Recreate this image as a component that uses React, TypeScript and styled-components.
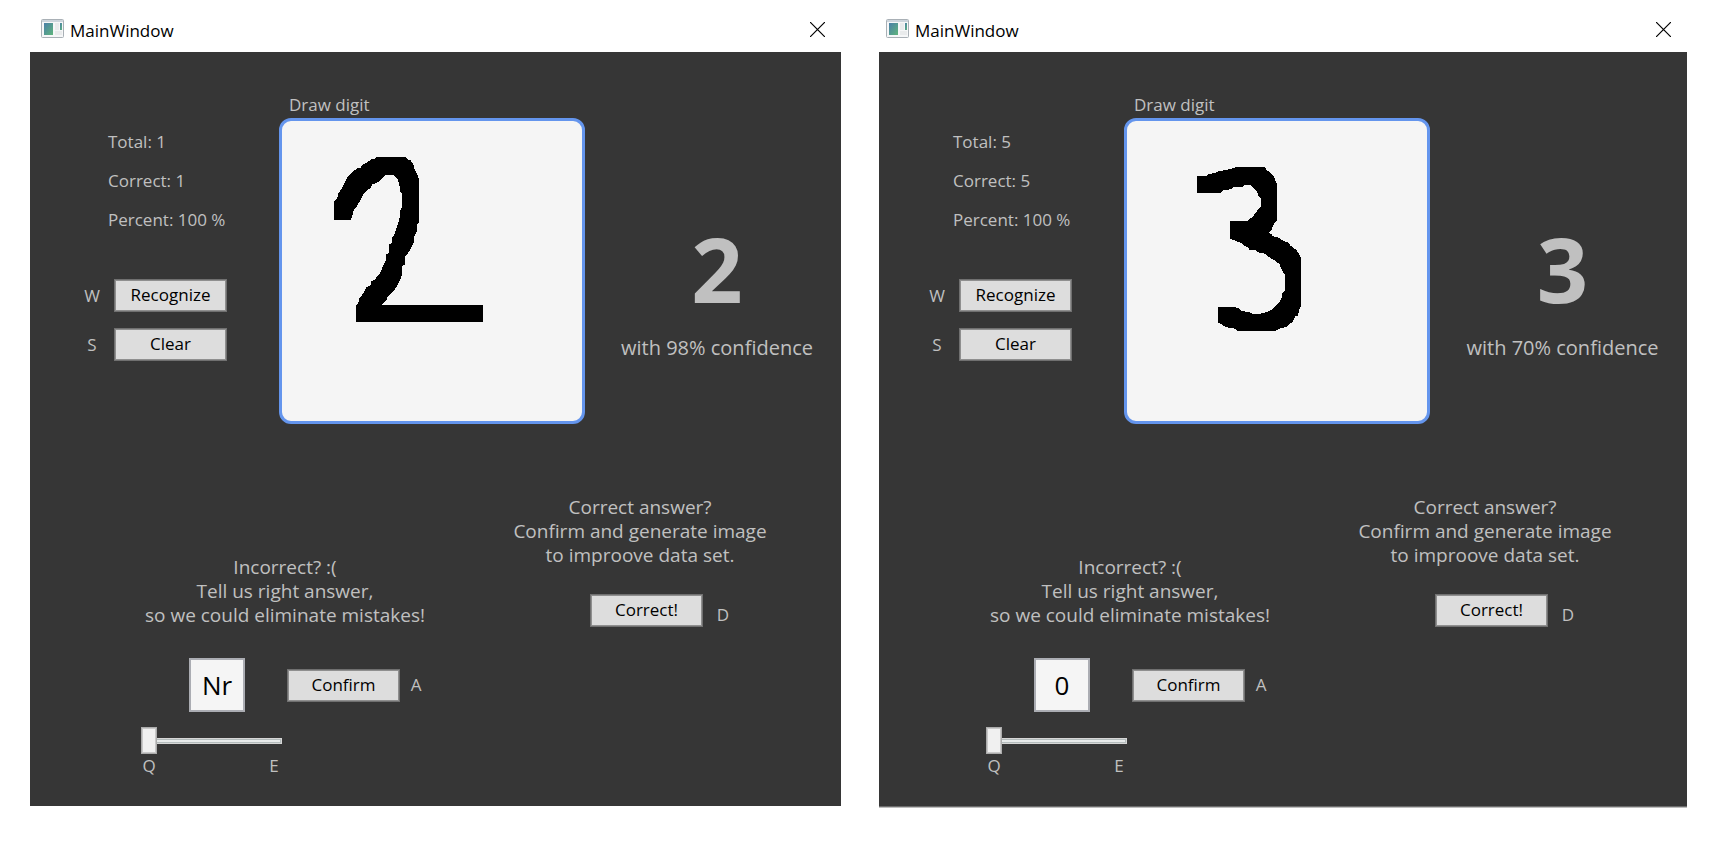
import React, { useId, useState } from "react";
import styled, { createGlobalStyle } from "styled-components";

const GlobalStyle = createGlobalStyle`
  *, *::before, *::after { box-sizing: border-box; }
  body { margin: 0; background: #fff; }
  p { margin: 0; }
  button, input { font: inherit; }
`;

const Desktop = styled.main`
  display: grid;
  grid-template-columns: 811fr 808fr;
  align-items: start;
  gap: 38px;
  padding: 0 33px 0 30px;
  font-family: "Trebuchet MS", "Open Sans", "Noto Sans", sans-serif;
  font-size: 17px;
  line-height: 24px;
`;

const Frame = styled.section<{ $clip: number }>`
  min-width: 0;
  overflow: hidden;

  & > * {
    margin-left: ${(p) => -p.$clip}px;
  }
`;

const TitleBar = styled.header`
  display: flex;
  align-items: center;
  gap: 6px;
  height: 52px;
  padding: 6px 8px 0 11px;
`;

const AppIcon = styled.svg`
  flex: none;
  margin-bottom: 2px;
`;

const WindowTitle = styled.h1`
  flex: 1;
  margin: 0;
  padding-top: 3px;
  color: #000;
  font-family: "Segoe UI", "Open Sans", sans-serif;
  font-size: 17px;
  font-weight: 400;
`;

const CloseButton = styled.button`
  display: grid;
  place-items: center;
  width: 31px;
  height: 31px;
  padding: 0;
  border: 0;
  background: transparent;
`;

const Client = styled.div<{ $edge: boolean }>`
  color: #c0c0c0;
  background: #363636;
  border-bottom: ${(p) => (p.$edge ? "1px solid #bdbdbd" : "0")};
  box-shadow: ${(p) => (p.$edge ? "inset 0 -1px #6c6c6c" : "none")};
  padding-bottom: ${(p) => (p.$edge ? 29 : 28)}px;
`;

const Upper = styled.div`
  display: grid;
  grid-template-columns: 249px 306px 1fr;
`;

const SidePanel = styled.div`
  padding: 78px 0 0 54px;
`;

const Stats = styled.div`
  display: grid;
  gap: 15px;
  padding-left: 24px;
  margin-bottom: 47px;
`;

const Actions = styled.div`
  display: grid;
  gap: 16px;
`;

const ActionRow = styled.div`
  display: flex;
  align-items: center;
  gap: 14px;
`;

const Hotkey = styled.kbd`
  width: 16px;
  font-family: inherit;
  text-align: center;
`;

const PushButton = styled.button`
  width: 113px;
  height: 33px;
  padding: 0 0 1px;
  border: 1px solid #707070;
  box-shadow: inset 0 0 0 1px #8f8f8f;
  background: #ddd;
  color: #000;
  line-height: 24px;
`;

const Drawing = styled.figure`
  display: flex;
  flex-direction: column;
  gap: 1px;
  margin: 0;
  padding-top: 41px;
`;

const DrawingLabel = styled.figcaption`
  padding-left: 10px;
`;

const Pad = styled.svg`
  width: 306px;
  height: 306px;
  border: 3px solid #6495ed;
  border-radius: 12px;
  background: #f5f5f5;
`;

const Result = styled.div`
  display: flex;
  flex-direction: column;
  align-items: center;
  gap: 20px;
  padding: 168px 0 0 8px;
`;

const Guess = styled.output`
  font-size: 90px;
  font-weight: 700;
  line-height: 96px;
`;

const Confidence = styled.p`
  font-size: 20px;
`;

const Lower = styled.div`
  display: grid;
  grid-template-columns: 288px 260px;
  gap: 81px;
  padding: 71px 0 0 111px;
`;

const Wrong = styled.div`
  padding-top: 60px;
`;

const Message = styled.p`
  font-size: 19px;
  text-align: center;
  white-space: pre-line;
`;

const AnswerRow = styled.div`
  display: flex;
  align-items: center;
  margin: 31px 0 15px;
  padding-left: 48px;
`;

const AnswerBox = styled.input`
  width: 56px;
  height: 54px;
  margin-right: 42px;
  padding: 0;
  border: 2px solid #abadb3;
  background: #f5f5f5;
  color: #000;
  font-size: 26px;
  text-align: center;
`;

const ConfirmKey = styled(Hotkey)`
  margin-left: 8px;
`;

const SliderGroup = styled.div`
  width: 141px;
`;

const Slider = styled.input`
  display: block;
  appearance: none;
  width: 100%;
  height: 27px;
  margin: 0;
  background: transparent;

  &::-webkit-slider-runnable-track {
    height: 6px;
    background: #e7eaea;
    box-shadow: inset 0 0 0 1px #d6d6d6, inset 0 0 0 2px #b4bcbc;
  }

  &::-webkit-slider-thumb {
    appearance: none;
    width: 16px;
    height: 27px;
    margin-top: -11px;
    border: 1px solid #acacac;
    background: #f0f0f0;
    box-shadow: inset 0 0 0 1px #c8c8c8;
  }
`;

const SliderKeys = styled.div`
  display: flex;
  justify-content: space-between;
`;

const Right = styled.div`
  display: grid;
  align-content: start;
  gap: 27px;
`;

const CorrectRow = styled.div`
  display: flex;
  align-items: flex-end;
  gap: 12px;
  padding-left: 80px;
`;

const STROKES = {
  two: "M320 231H405L413 238L422 241L431 255L434 270L440 280L446 295V428L442 431L440 455L434 465L431 488L424 502L415 518L405 530V553L397 558V583L391 598L379 622L366 638L352 652L350 661L342 668L333 676H639V726H257V677L265 668L268 655L280 640L289 622L302 616L304 604L313 600L330 580L340 556L348 540V523L356 520V493L365 490L366 474L374 462L382 435L388 420L391 390L397 378V342L391 335L388 315L383 298L370 285H348L335 298L320 309L308 312L300 325L283 338L270 362L260 380L252 388L247 408L242 420H193V362L202 355L205 340L215 325L231 294L245 279L262 264L273 263L276 255L290 249L304 237L318 235Z",
  three:
    "M376 262H464L470 270L478 275L491 290L500 309V423L494 428L484 450L474 459L484 462L488 468L508 474L520 483L536 488L540 496L557 508L568 523L573 535V680L568 688L564 706L555 710L549 725L535 735L527 742L512 744L498 752H382L370 744L350 742L330 731L325 728V681H373L388 686L394 693L419 696L430 703H452L455 699L470 697L490 686L500 676L514 658L516 642L524 632V584L518 575L508 552L495 542L478 532L462 520L444 517L437 509L418 509L414 501L403 498L395 490L361 476V424H410L428 410L440 394L452 379V353L446 348L440 334L424 316H403L400 320L372 320L362 328L341 330L331 339H262V289H289L295 282L315 279L328 272L350 271L356 266L374 265Z",
};

type WindowProps = {
  total: number;
  correct: number;
  guess: string;
  confidence: number;
  answer: string;
  stroke: string;
  viewBox: string;
  clip?: number;
  edge?: boolean;
};

function WindowIcon() {
  const fill = useId();
  return (
    <AppIcon width="23" height="19" viewBox="0 0 23 19" aria-hidden="true">
      <defs>
        <linearGradient id={fill} x1="0" y1="0" x2="1" y2="1">
          <stop offset="0" stopColor="#4a7fa8" />
          <stop offset="1" stopColor="#5fb57c" />
        </linearGradient>
      </defs>
      <rect x="0.5" y="0.5" width="22" height="18" rx="1" fill="#f6f7f8" stroke="#a9b0b6" />
      <rect x="1" y="1" width="21" height="2" fill="#cdd5dc" />
      <rect x="3" y="4" width="9" height="12" fill={`url(#${fill})`} />
      <rect x="14" y="4" width="4" height="7" fill="#e9ebec" />
      <rect x="19" y="4" width="2" height="7" fill={`url(#${fill})`} />
      <rect x="14" y="12" width="7" height="4" fill="#e9ebec" />
    </AppIcon>
  );
}

function RecognizerWindow(props: WindowProps) {
  const [slider, setSlider] = useState(0);
  const percent = Math.round((props.correct / props.total) * 100);
  return (
    <Frame $clip={props.clip ?? 0}>
      <TitleBar>
        <WindowIcon />
        <WindowTitle>MainWindow</WindowTitle>
        <CloseButton type="button" aria-label="Close">
          <svg width="15" height="15" viewBox="0 0 15 15" aria-hidden="true">
            <path d="M0 0L15 15M15 0L0 15" stroke="#000" strokeWidth="1.2" />
          </svg>
        </CloseButton>
      </TitleBar>
      <Client $edge={props.edge ?? false}>
        <Upper>
          <SidePanel>
            <Stats>
              <p>Total: {props.total}</p>
              <p>Correct: {props.correct}</p>
              <p>Percent: {percent} %</p>
            </Stats>
            <Actions>
              <ActionRow>
                <Hotkey>W</Hotkey>
                <PushButton type="button">Recognize</PushButton>
              </ActionRow>
              <ActionRow>
                <Hotkey>S</Hotkey>
                <PushButton type="button">Clear</PushButton>
              </ActionRow>
            </Actions>
          </SidePanel>
          <Drawing>
            <DrawingLabel>Draw digit</DrawingLabel>
            <Pad viewBox={props.viewBox} role="img" aria-label="Drawing area">
              <path d={props.stroke} shapeRendering="crispEdges" />
            </Pad>
          </Drawing>
          <Result>
            <Guess>{props.guess}</Guess>
            <Confidence>with {props.confidence}% confidence</Confidence>
          </Result>
        </Upper>
        <Lower>
          <Wrong>
            <Message>{"Incorrect? :(\nTell us right answer,\nso we could eliminate mistakes!"}</Message>
            <AnswerRow>
              <AnswerBox aria-label="Right answer" defaultValue={props.answer} />
              <PushButton type="button">Confirm</PushButton>
              <ConfirmKey>A</ConfirmKey>
            </AnswerRow>
            <SliderGroup>
              <Slider
                type="range"
                min={0}
                max={9}
                value={slider}
                onChange={(e) => setSlider(Number(e.target.value))}
                aria-label="Digit"
              />
              <SliderKeys>
                <Hotkey>Q</Hotkey>
                <Hotkey>E</Hotkey>
              </SliderKeys>
            </SliderGroup>
          </Wrong>
          <Right>
            <Message>{"Correct answer?\nConfirm and generate image\nto improove data set."}</Message>
            <CorrectRow>
              <PushButton type="button">Correct!</PushButton>
              <Hotkey>D</Hotkey>
            </CorrectRow>
          </Right>
        </Lower>
      </Client>
    </Frame>
  );
}

export default function App() {
  return (
    <>
      <GlobalStyle />
      <Desktop>
        <RecognizerWindow
          total={1}
          correct={1}
          guess="2"
          confidence={98}
          answer="Nr"
          stroke={STROKES.two}
          viewBox="36 123 900 900"
        />
        <RecognizerWindow
          total={5}
          correct={5}
          guess="3"
          confidence={70}
          answer="0"
          stroke={STROKES.three}
          viewBox="51 123 900 900"
          clip={4}
          edge
        />
      </Desktop>
    </>
  );
}
